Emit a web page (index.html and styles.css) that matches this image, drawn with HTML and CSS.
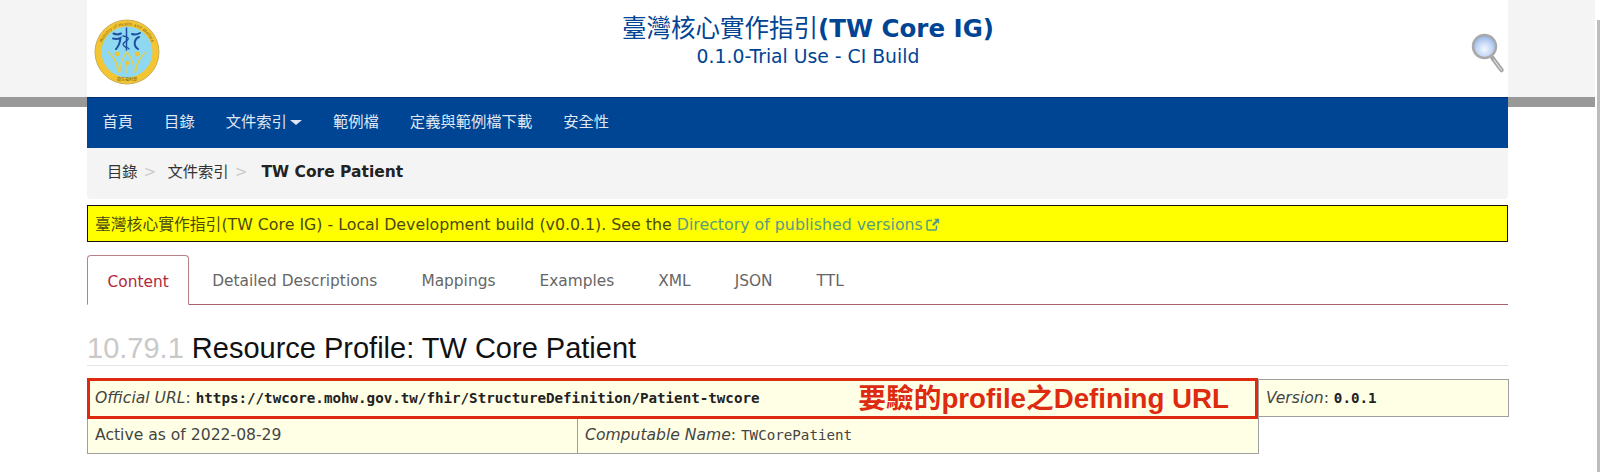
FILE: index.html
```html
<!DOCTYPE html>
<html lang="zh-Hant">
<head>
<meta charset="utf-8">
<title>TW Core Patient</title>
<link rel="stylesheet" href="styles.css">
</head>
<body>
<div class="page">
  <div class="container">
    <header class="site-header">
      <a class="logo" href="#">
        <svg width="66" height="66" viewBox="0 0 66 66">
          <defs>
            <path id="logo-top" d="M6.500 33a26.500 26.500 0 0 1 53 0"/>
          </defs>
          <circle cx="33" cy="33" r="32" fill="#f2c531" stroke="#c9ad5a" stroke-width="1"/>
          <circle cx="33" cy="33" r="25.500" fill="#8ed8f2"/>
          <text class="logo-ring"><textPath href="#logo-top" startOffset="50%" text-anchor="middle">Ministry of Health and Welfare</textPath></text>
          <g fill="none" stroke="#1f4fa0" stroke-width="2" stroke-linecap="round">
            <path d="M32.500 9v22" stroke-width="1.500"/>
            <path d="M19.500 14.500c2.500 1.200 5 1.200 7.500 0"/>
            <path d="M19 19.500c3 .8 5.500.4 7.500-.5-.5 4-1.500 8-4.500 11"/>
            <path d="M38 15c2.500 1 5 .8 8-1"/>
            <path d="M45 18c-5 2-6 9-1 12"/>
            <path d="M29 17c5 .5 6.500 2.500 4 4.500s-5.500 3-3 5.500 5 1.500 5 3" stroke-width="1.300"/>
          </g>
          <g fill="none" stroke="#e6d04a" stroke-width="1.200" stroke-linecap="round">
            <path d="M14 33c5 4 9 11 10 19M52 33c-5 4-9 11-10 19"/>
            <path d="M19 38c3 4 5 9 6 15M47 38c-3 4-5 9-6 15"/>
            <path d="M33 33c-5 6-7 13-7 20M33 33c5 6 7 13 7 20M33 43v11"/>
          </g>
          <circle cx="23" cy="35" r="2.400" fill="#efc52e"/>
          <circle cx="43" cy="35" r="2.400" fill="#efc52e"/>
          <circle cx="33" cy="44" r="2.200" fill="#efc52e"/>
          <text class="logo-name" x="33" y="62" text-anchor="middle">衛生福利部</text>
        </svg>
      </a>
      <div class="site-title">
        <h2 class="ig-name">臺灣核心實作指引<b>(TW Core IG)</b></h2>
        <div class="ig-version">0.1.0-Trial Use - CI Build</div>
      </div>
      <a class="search" href="#">
        <svg width="36" height="42" viewBox="0 0 36 42">
          <defs>
            <radialGradient id="lens" cx="50%" cy="62%" r="60%">
              <stop offset="0" stop-color="#f4f8ff"/>
              <stop offset="0.55" stop-color="#c3d6f5"/>
              <stop offset="1" stop-color="#8fb0e6"/>
            </radialGradient>
          </defs>
          <path d="M21.500 25 30.500 37" stroke="#a5a5a5" stroke-width="4.500" stroke-linecap="round"/>
          <path d="M23 27 30.500 37" stroke="#dedede" stroke-width="1.200" stroke-linecap="round"/>
          <circle cx="13.500" cy="13.500" r="11.500" fill="url(#lens)" stroke="#a9a9a9" stroke-width="2.400"/>
        </svg>
      </a>
    </header>

    <nav class="navbar">
      <a href="#">首頁</a>
      <a href="#">目錄</a>
      <a href="#">文件索引<span class="caret"></span></a>
      <a href="#">範例檔</a>
      <a href="#">定義與範例檔下載</a>
      <a href="#">安全性</a>
    </nav>

    <ol class="breadcrumb">
      <li><a href="#">目錄</a></li>
      <li class="sep">&gt;</li>
      <li><a href="#">文件索引</a></li>
      <li class="sep">&gt;</li>
      <li class="current">TW Core Patient</li>
    </ol>

    <div class="notice">
      臺灣核心實作指引(TW Core IG) - Local Development build (v0.0.1). See the
      <a href="#">Directory of published versions<svg class="ext" width="14" height="13" viewBox="0 0 14 13"><path d="M6 2.500H2.200A1.200 1.200 0 0 0 1 3.700v7.100A1.200 1.200 0 0 0 2.200 12h7.100a1.200 1.200 0 0 0 1.200-1.200V7.500" fill="none" stroke="currentColor" stroke-width="1.500"/><path d="M8 .8h5.200V6l-1.800-1.800L7.600 8 6 6.400l3.800-3.800Z" fill="currentColor"/></svg></a>
    </div>

    <ul class="tabs">
      <li class="tab active"><a href="#">Content</a></li>
      <li class="tab"><a href="#">Detailed Descriptions</a></li>
      <li class="tab"><a href="#">Mappings</a></li>
      <li class="tab"><a href="#">Examples</a></li>
      <li class="tab"><a href="#">XML</a></li>
      <li class="tab"><a href="#">JSON</a></li>
      <li class="tab"><a href="#">TTL</a></li>
    </ul>

    <h1 class="page-title"><span class="secno">10.79.1</span> Resource Profile: TW Core Patient</h1>

    <div class="meta-wrap">
      <table class="meta">
        <colgroup>
          <col class="col-a"><col class="col-b"><col class="col-c">
        </colgroup>
        <tr>
          <td colspan="2"><i>Official URL</i>: <code class="strong">https://twcore.mohw.gov.tw/fhir/StructureDefinition/Patient-twcore</code></td>
          <td><i>Version</i>: <code class="strong">0.0.1</code></td>
        </tr>
        <tr>
          <td>Active as of 2022-08-29</td>
          <td><i>Computable Name</i>: <code>TWCorePatient</code></td>
        </tr>
      </table>
      <div class="callout">要驗的profile之Defining URL</div>
    </div>
  </div>
  <div class="scrollbar"></div>
</div>
</body>
</html>
```

FILE: styles.css
```css
html, body {
  margin: 0;
  padding: 0;
  height: 472px;
  overflow: hidden;
  background: #fff;
}
body {
  font-family: "DejaVu Sans", "Noto Sans CJK TC", sans-serif;
  font-size: 15.800px;
  color: #444;
}
a { text-decoration: none; color: inherit; }

.page {
  position: relative;
  width: 1595px;
  height: 472px;
  background: linear-gradient(#f4f4f4 0, #f4f4f4 97px, #999 97px, #999 107px, #fff 107px);
}
.scrollbar {
  position: absolute;
  left: 1597px;
  top: 20px;
  width: 3px;
  height: 452px;
  background: #bdbdbd;
}
.container {
  width: 1421px;
  margin: 0 auto;
  background: #fff;
  height: 472px;
}

/* header */
.site-header {
  display: flex;
  align-items: flex-start;
  height: 97px;
}
.logo {
  flex: none;
  width: 106px;
  padding: 19px 0 0 7px;
  box-sizing: border-box;
  height: 97px;
}
.logo svg { display: block; }
.logo-ring { font: 4.200px "DejaVu Sans", sans-serif; fill: #7d6a20; }
.logo-name { font: 4px "Noto Sans CJK TC", sans-serif; fill: #6a5a1c; }
.site-title {
  flex: 1;
  text-align: center;
  color: #004494;
  padding-top: 13px;
  padding-left: 21px;
}
.ig-name {
  margin: 0;
  font-size: 24.500px;
  font-weight: 400;
  line-height: 32px;
}
.ig-name b { font-weight: 700; }
.ig-version {
  font-size: 18.800px;
  line-height: 24px;
}
.search {
  flex: none;
  width: 106px;
  padding: 33px 0 0 69px;
  box-sizing: border-box;
}
.search svg { display: block; }

/* nav */
.navbar {
  display: flex;
  height: 51px;
  background: #004494;
  color: #dfe7f2;
  font-size: 15.300px;
  line-height: 51px;
  box-shadow: inset 0 1px 0 #00307a;
}
.navbar a { padding: 0 15.500px; }
.caret {
  display: inline-block;
  margin-left: 3px;
  vertical-align: middle;
  border-top: 5px solid #dfe7f2;
  border-left: 6px solid transparent;
  border-right: 6px solid transparent;
}

/* breadcrumb */
.breadcrumb {
  list-style: none;
  margin: 0;
  padding: 0 20px;
  height: 51px;
  box-sizing: border-box;
  display: flex;
  align-items: baseline;
  gap: 7px;
  line-height: 48px;
  background: #f4f4f4;
  border-radius: 0 0 4px 4px;
  color: #333;
  font-size: 15.300px;
}
.breadcrumb .sep { color: #ccc; margin-right: 4px; margin-left: -1px; }
.breadcrumb .current { font-weight: 700; color: #222; font-size: 15.500px; margin-left: 3px; }

/* notice */
.notice {
  margin-top: 6px;
  height: 37px;
  box-sizing: border-box;
  padding: 1px 7px 0;
  line-height: 35px;
  background: #ff0;
  border: 1px solid #111;
  color: #4a4a10;
}
.notice a { color: #5a9a80; }
.ext { margin-left: 3px; vertical-align: -1px; }

/* tabs */
.tabs {
  list-style: none;
  margin: 13px 0 0;
  padding: 0;
  height: 50px;
  box-sizing: border-box;
  display: flex;
  border-bottom: 1px solid #a8606e;
  font-size: 15.400px;
}
.tab {
  height: 49px;
  line-height: 52px;
  padding: 0 22px;
  color: #666;
}
.tab.active {
  padding: 0 19.500px;
  margin-right: 1px;
  height: 50px;
  box-sizing: border-box;
  background: #fff;
  color: #b2283e;
  border: 1px solid #b9808a;
  border-bottom: 1px solid #fff;
  border-radius: 4px 4px 0 0;
}

/* title */
.page-title {
  margin: 25px 0 0;
  height: 36px;
  box-sizing: border-box;
  border-bottom: 1px solid #e4e4e4;
  font-family: "Liberation Sans", sans-serif;
  font-size: 29px;
  line-height: 36px;
  font-weight: 400;
  color: #111;
}
.secno { color: #c9c9c9; }

/* table */
.meta-wrap {
  position: relative;
  margin-top: 13px;
}
.meta {
  width: 1421px;
  table-layout: fixed;
  border-collapse: collapse;
  font-size: 15.600px;
}
.col-a { width: 490px; }
.col-b { width: 681px; }
.col-c { width: 250px; }
.meta td {
  height: 37px;
  padding: 0 7px;
  box-sizing: border-box;
  background: #ffffe6;
  border: 1px solid #a0a0a0;
  color: #444;
}
.meta code {
  font-family: "DejaVu Sans Mono", monospace;
  font-size: 14.200px;
}
.meta code.strong {
  font-weight: 700;
  color: #222;
}
.callout {
  position: absolute;
  left: 0;
  top: -1px;
  width: 1171px;
  height: 41px;
  box-sizing: border-box;
  padding-right: 26px;
  border: 3px solid #dd2a10;
  color: #dd2a10;
  font: 700 27.700px/35px "Liberation Sans", "Noto Sans CJK TC", sans-serif;
  text-align: right;
}
```
